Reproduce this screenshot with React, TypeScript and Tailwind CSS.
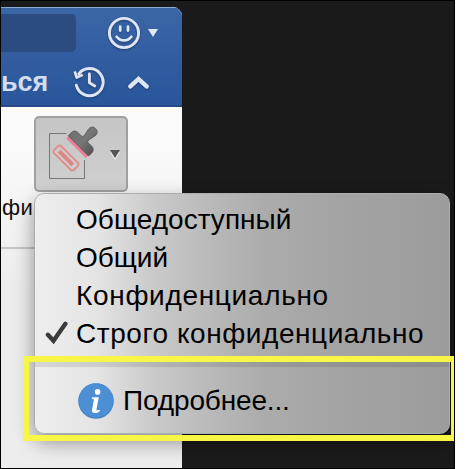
import React from "react";

function SmileIcon() {
  return (
    <svg width="34" height="34" viewBox="0 0 34 34" fill="none" stroke="#dfe6f3" strokeLinecap="round">
      <circle cx="17" cy="17" r="14.6" strokeWidth="2.9" />
      <path d="M13.2 10.7v3.9M21 10.7v3.9" strokeWidth="2.8" />
      <path d="M9.6 20.8c3.7 4.9 11.1 4.9 14.8 0" strokeWidth="2.7" />
    </svg>
  );
}

function HistoryIcon() {
  return (
    <svg width="34" height="32" viewBox="0 0 34 32" fill="none" stroke="#dfe6f3" strokeLinecap="round" strokeLinejoin="round">
      <path d="M6.8 7.8A13.6 13.6 0 1 1 4.3 19.2" strokeWidth="2.9" />
      <path d="M2.7 5.3l2 6.2 6-2.8" strokeWidth="2.7" strokeLinecap="butt" />
      <path d="M17.4 8v8.8l5.4 3.1" strokeWidth="2.9" />
    </svg>
  );
}

function StampIcon() {
  return (
    <svg width="54" height="56" viewBox="0 0 54 56" fill="none">
      <path d="M18.5 9.5h-17v45h35V36" stroke="#777" strokeWidth="1" />
      <g transform="translate(18 34) rotate(45)">
        <rect x="-14" y="-5" width="28" height="10" rx="2.4" stroke="#e28d8a" strokeWidth="1.9" />
        <rect x="-9.7" y="-2" width="19.4" height="4" fill="#df8582" />
      </g>
      <g transform="translate(33 19.3) rotate(45)">
        <path d="M-13.8 3.3h27.6v3.8h-27.6z" fill="#ea7f98" />
        <path d="M-14.4 3.7v-4.2c0-3.5 2-5 5-5h4.4c1.5 0 1.9-1 1.7-3l-1.3-6.6c-.6-3.5 1.5-5.6 4.6-5.6s5.2 2.1 4.6 5.6l-1.3 6.6c-.2 2 .2 3 1.7 3H9.4c3 0 5 1.5 5 5v4.2z" fill="url(#metal)" stroke="#505050" strokeWidth=".7" />
      </g>
      <defs>
        <linearGradient id="metal" x1="0" y1="0" x2="1" y2="0">
          <stop stopColor="#707070" /><stop offset=".5" stopColor="#777" /><stop offset="1" stopColor="#555" />
        </linearGradient>
      </defs>
    </svg>
  );
}

function CheckIcon() {
  return (
    <svg width="24" height="24" viewBox="0 0 24 24" fill="none">
      <path d="M2.9 13.7l5.6 6.1L20.4 2.8" stroke="#3b3b3b" strokeWidth="4.3" strokeLinecap="round" />
    </svg>
  );
}

function InfoIcon() {
  return (
    <svg width="36" height="36" viewBox="0 0 36 36">
      <circle cx="18" cy="18" r="17.8" fill="#4181c6" />
      <circle cx="18" cy="17.4" r="17" fill="#4c8fd4" />
      <circle cx="19.6" cy="8.9" r="2.8" fill="#fff" />
      <path d="M14.3 14.3h6.5l-2.3 11.8c-.3 1.5.6 1.5 3.3.6v1.5c-4.4 3.2-8.5 1.9-7.8-1.5l1.8-9.2c.2-1.3-.3-1.5-2-1.7z" fill="#fff" />
    </svg>
  );
}

const labels = [
  { text: "Общедоступный", tracking: "tracking-[0.04px]", checked: false },
  { text: "Общий", tracking: "tracking-[0px]", checked: false },
  { text: "Конфиденциально", tracking: "tracking-[0.68px]", checked: false },
  { text: "Строго конфиденциально", tracking: "tracking-[0.55px]", checked: true },
];

export default function App() {
  return (
    <div className="w-[468px] h-[469px] bg-white overflow-hidden font-['Liberation_Sans',sans-serif]">
      <div className="relative w-[455px] h-[469px] border border-black bg-[#1a1a1a] pt-[6px] overflow-hidden">
        <div className="w-[181px] h-[461px] rounded-tr-[9px] overflow-hidden bg-linear-to-b from-[#fafafa] from-30% to-[#ededed] to-60%">
          <header className="h-[100px] border-t border-[#8ca9d3] border-b-2 border-b-[#244a87] bg-linear-to-b from-[#3b66a6] to-[#29559b]">
            <div className="flex h-[50px] items-center">
              <div className="h-[38px] w-[75px] rounded-r-[5px] bg-[#2c4b80]" />
              <div className="ml-[31px] drop-shadow-[0_1px_1px_#1d3f73]"><SmileIcon /></div>
              <svg className="ml-[7px]" width="10" height="8" viewBox="0 0 10 8"><path d="M0 0h10L5 8z" fill="#e4eaf5" /></svg>
            </div>
            <div className="flex h-[47px] items-center">
              <span className="w-[47px] whitespace-nowrap text-[27px] font-bold leading-[30px] text-[#d4ddef]">ься</span>
              <div className="ml-[24px] drop-shadow-[0_1px_1px_#1d3f73]"><HistoryIcon /></div>
              <svg className="ml-[22px] drop-shadow-[0_1px_1px_#1d3f73]" width="21" height="14" viewBox="0 0 21 14" fill="none"><path d="M2.4 11.4L10.5 4l8.1 7.4" stroke="#dfe6f3" strokeWidth="4.4" strokeLinecap="round" /></svg>
            </div>
          </header>
          <div className="mt-[9px] h-[133px] border-b-2 border-[#c4c4c4]">
            <button className="ml-[33px] flex h-[76px] w-[94px] rounded-[5px] border-2 border-[#a0a0a0] bg-linear-to-b from-[#c5c5c5] to-[#d0d0d0] pl-[12px] pt-[6px]">
              <StampIcon />
              <svg className="mt-[26px] ml-[7px]" width="12" height="10" viewBox="0 0 12 10"><path d="M1 2h10L6 10z" fill="#eee" /><path d="M1 0h10L6 8z" fill="#555" /></svg>
            </button>
            <div className="mt-[3px] pl-[1px] text-[22px] leading-[26px] text-[#111] tracking-[0.3px]">фи</div>
          </div>
        </div>
        <div className="absolute left-[33px] top-[192px] h-[241px] w-[416px] rounded-[10px] border border-[#adadad] bg-[linear-gradient(90deg,#eeeeee_0%,#e4e4e4_15%,#cbcbcb_28%,#bcbcbc_40%,#acacac_55%,#a3a3a3_75%,#9c9c9c_100%)] pt-[7px] text-[28px] text-black shadow-[0_8px_20px_rgba(0,0,0,0.4)]">
          {labels.map((item) => (
            <div key={item.text} className="flex h-[38px] items-center whitespace-nowrap">
              <div className="flex w-[41px] pl-[10px] pb-[2px]">{item.checked && <CheckIcon />}</div>
              <span className={item.tracking}>{item.text}</span>
            </div>
          ))}
          <div className="mt-[8px] h-[6px] border-t border-white/40 bg-black/10" />
          <div className="mt-[1px] flex h-[66px] items-center whitespace-nowrap">
            <div className="ml-[43px] mr-[9px]"><InfoIcon /></div>
            <span className="tracking-[-0.15px]">Подробнее...</span>
          </div>
        </div>
        <div className="absolute left-[22px] top-[355px] h-[85px] w-[432px] border-[6px] border-r-4 border-[#f7f545]" />
      </div>
    </div>
  );
}
